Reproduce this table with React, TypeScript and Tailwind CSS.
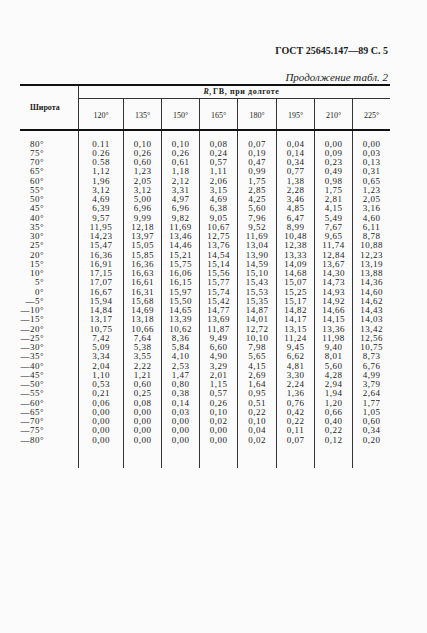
const lats = [
  "80°", "75°", "70°", "65°", "60°", "55°", "50°", "45°", "40°", "35°", "30°",
  "25°", "20°", "15°", "10°", "5°", "0°", "—5°", "—10°", "—15°", "—20°", "—25°",
  "—30°", "—35°", "—40°", "—45°", "—50°", "—55°", "—60°", "—65°", "—70°", "—75°", "—80°",
];

const lons = ["120°", "135°", "150°", "165°", "180°", "195°", "210°", "225°"];

// values per longitude column, top (80°) to bottom (—80°)
const cols = [
  "0.11 0.26 0.58 1,12 1,96 3,12 4,69 6,39 9,57 11,95 14,23 15,47 16,36 16,91 17,15 17,07 16,67 15,94 14,84 13,17 10,75 7,42 5,09 3,34 2,04 1,10 0,53 0,21 0,06 0,00 0,00 0,00 0,00",
  "0,10 0,26 0,60 1,23 2,05 3,12 5,00 6,96 9,99 12,18 13,97 15,05 15,85 16,36 16,63 16,61 16,31 15,68 14,69 13,18 10,66 7,64 5,38 3,55 2,22 1,21 0,60 0,25 0,08 0,00 0,00 0,00 0,00",
  "0,10 0,26 0,61 1,18 2,12 3,31 4,97 6,96 9,82 11,69 13,46 14,46 15,21 15,75 16,06 16,15 15,97 15,50 14,65 13,39 10,62 8,36 5,84 4,10 2,53 1,47 0,80 0,38 0,14 0,03 0,00 0,00 0,00",
  "0,08 0,24 0,57 1,11 2,06 3,15 4,69 6,38 9,05 10,67 12,75 13,76 14,54 15,14 15,56 15,77 15,74 15,42 14,77 13,69 11,87 9,49 6,60 4,90 3,29 2,01 1,15 0,57 0,26 0,10 0,02 0,00 0,00",
  "0,07 0,19 0,47 0,99 1,75 2,85 4,25 5,60 7,96 9,52 11,69 13,04 13,90 14,59 15,10 15,43 15,53 15,35 14,87 14,01 12,72 10,10 7,98 5,65 4,15 2,69 1,64 0,95 0,51 0,22 0,10 0,04 0,02",
  "0,04 0,14 0,34 0,77 1,38 2,28 3,46 4,85 6,47 8,99 10,48 12,38 13,33 14,09 14,68 15,07 15,25 15,17 14,82 14,17 13,15 11,24 9,45 6,62 4,81 3,30 2,24 1,36 0,76 0,42 0,22 0,11 0,07",
  "0,00 0,09 0,23 0,49 0,98 1,75 2,81 4,15 5,49 7,67 9,65 11,74 12,84 13,67 14,30 14,73 14,93 14,92 14,66 14,15 13,36 11,98 9,40 8,01 5,60 4,28 2,94 1,94 1,20 0,66 0,40 0,22 0,12",
  "0,00 0,03 0,13 0,31 0,65 1,23 2,05 3,16 4,60 6,11 8,78 10,88 12,23 13,19 13,88 14,36 14,60 14,62 14,43 14,03 13,42 12,56 10,75 8,73 6,76 4,99 3,79 2,64 1,77 1,05 0,60 0,34 0,20",
].map((s) => s.split(" "));

const widths = ["w-[45px]", "w-[38px]", "w-[38px]", "w-[38px]", "w-[39px]", "w-[38px]", "w-[38px]", "w-[37px]"];

export default function App() {
  return (
    <div className="min-h-[633px] w-full bg-[#fbfbfb] text-[#1c1c1c] font-['Liberation_Serif','DejaVu_Serif',serif]">
      <div className="ml-[20px] w-[370px] pt-[45px]">
        <div className="text-right pr-[2px] text-[10px] leading-[12px] font-bold">
          ГОСТ 25645.147—89 С. 5
        </div>
        <div className="mt-[14px] text-right pr-[2px] text-[11px] leading-[12px] italic">
          Продолжение табл. 2
        </div>

        <div className="mt-[1px] border-t-2 border-[#111]">
          {/* header */}
          <div className="flex border-b-2 border-[#111]">
            <div className="w-[59px] h-[43px] border-r border-[#333] flex items-center pl-[10px] text-[8px] font-bold">
              Широта
            </div>
            <div className="flex-1 flex flex-col">
              <div className="h-[13px] border-b border-[#333] flex items-center justify-center pl-[14px] text-[8px] font-bold tracking-[0.6px]">
                <span className="italic mr-[1px]">R,</span> ГВ, при долготе
              </div>
              <div className="flex flex-1">
                {lons.map((l, i) => (
                  <div
                    key={l}
                    className={`${widths[i]} flex items-center justify-center pt-[3px] text-[8px] ${i < lons.length - 1 ? "border-r border-[#333]" : ""}`}
                  >
                    {l}
                  </div>
                ))}
              </div>
            </div>
          </div>

          {/* body */}
          <div className="flex text-[9px] leading-[9.25px] tracking-[0.5px]">
            <div className="w-[59px] border-r border-[#333] pt-[8.5px] pb-[23px] pr-[34px] flex flex-col items-end">
              {lats.map((l) => (
                <div key={l}>{l}</div>
              ))}
            </div>
            {cols.map((c, i) => (
              <div
                key={lons[i]}
                className={`${widths[i]} pt-[8.5px] pb-[23px] flex flex-col items-center ${i < cols.length - 1 ? "border-r border-[#333]" : ""}`}
              >
                {c.map((v, j) => (
                  <div key={j}>{v}</div>
                ))}
              </div>
            ))}
          </div>
        </div>
      </div>
    </div>
  );
}
